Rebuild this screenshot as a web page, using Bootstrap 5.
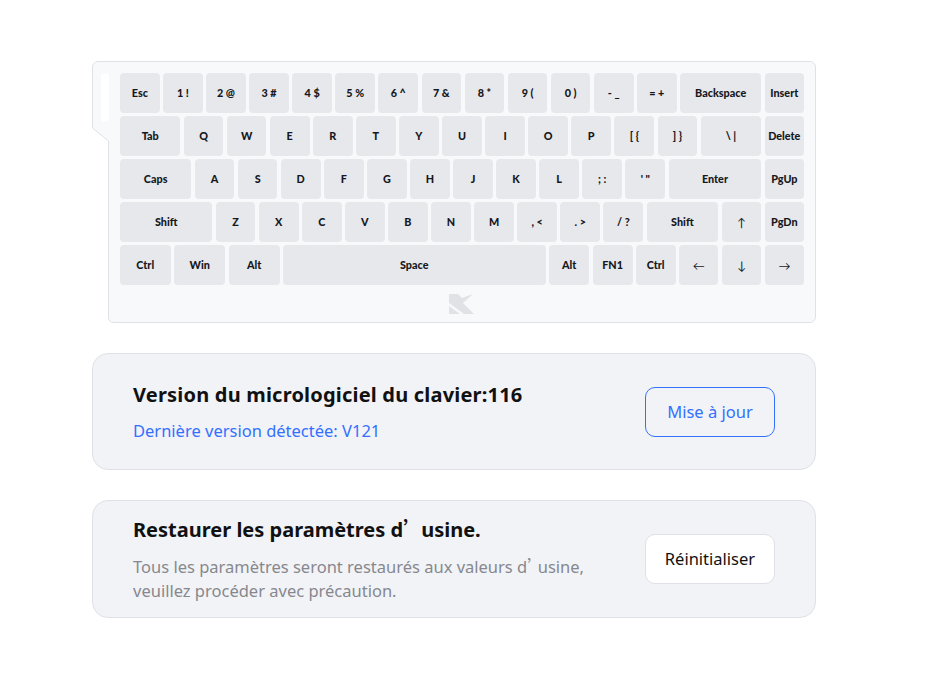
<!DOCTYPE html>
<html lang="fr">
<head>
    <meta charset="UTF-8">
    <title>Clavier</title>
    <link href="https://cdn.jsdelivr.net/npm/bootstrap@5.3.0/dist/css/bootstrap.min.css" rel="stylesheet">
    <style>
        body {
            background-color: #fff;
            font-family: "Noto Sans", "Liberation Sans", sans-serif;
        }
        .page-wrap {
            width: 724px;
            margin-left: 92px;
            padding-top: 61px;
        }
        .kb-box {
            position: relative;
            height: 262px;
            padding: 12px 0 0 28px;
        }
        .kb-shape {
            position: absolute;
            left: 0;
            top: 0;
        }
        .kb-keys {
            position: relative;
        }
        .kb-row {
            gap: 3.4px;
            margin-bottom: 3.25px;
        }
        .kb-key {
            height: 39.8px;
            padding-top: 1px;
            background-color: #e6e8ec;
            border-radius: 4px;
            color: #16181d;
            font-family: "Lato", "Liberation Sans", sans-serif;
            font-weight: 900;
            font-size: 10.8px;
            white-space: nowrap;
        }
        .kb-arrow {
            font-weight: 400;
            font-size: 12px;
        }
        .kb-logo {
            position: absolute;
            left: 357px;
            top: 233px;
        }
        .info-card {
            height: 117px;
            margin-top: 30px;
            padding: 0 40px;
            background-color: #f2f3f7;
            border: 1px solid #dfe1e6;
            border-radius: 16px;
        }
        .info-tall {
            height: 118px;
        }
        .info-title {
            font-size: 20px;
            font-weight: 700;
            line-height: 28px;
            color: #111;
            margin-bottom: 10px;
        }
        .title-spaced {
            letter-spacing: .2px;
        }
        .info-sub {
            font-size: 16.5px;
            line-height: 24px;
        }
        .sub-blue { color: #3370ff; }
        .sub-grey { color: #86888e; }
        .wide-quote {
            font-family: "Noto Sans CJK SC", sans-serif;
            letter-spacing: -2px;
        }
        .sub-grey .wide-quote {
            letter-spacing: -6px;
        }
        .act-btn {
            width: 130px;
            height: 50px;
            border-radius: 10px;
            font-size: 16.5px;
            padding: 1px 0 0;
        }
        .act-update {
            color: #3370ff;
            border: 1px solid #3370ff;
            background: transparent;
        }
        .act-reset {
            color: #111;
            border: 1px solid #dfe1e6;
            background: #fff;
        }
    </style>
</head>
<body>
    <div class="page-wrap">
        <div class="kb-box">
            <svg class="kb-shape" width="724" height="262" viewBox="0 0 724 262">
                <path d="M6 .5H718a5.500 5.500 0 0 1 5.500 5.500V256a5.500 5.500 0 0 1-5.500 5.500H21.500a5 5 0 0 1-5-5V80L.5 67V6A5.500 5.500 0 0 1 6 .5Z" fill="#f8f9fb" stroke="#dfe1e6"/>
                <rect x="9" y="12.500" width="8" height="48" rx="3" fill="#fff"/>
            </svg>
            <div class="kb-keys" id="keys"></div>
            <svg class="kb-logo" width="25" height="20" viewBox="0 0 25 20">
                <path d="M0 0H9L13 4L24 0L14 9L25 20H15L0 9Z" fill="#e0e2e6"/>
                <path d="M0 12L11 20H0Z" fill="#e0e2e6"/>
            </svg>
        </div>

        <div class="info-card d-flex align-items-center justify-content-between">
            <div>
                <div class="info-title title-spaced">Version du micrologiciel du clavier:116</div>
                <div class="info-sub sub-blue">Dernière version détectée: V121</div>
            </div>
            <button class="btn act-btn act-update">Mise à jour</button>
        </div>

        <div class="info-card info-tall d-flex align-items-center justify-content-between">
            <div>
                <div class="info-title">Restaurer les paramètres d<span class="wide-quote" lang="zh-CN">’</span>usine.</div>
                <div class="info-sub sub-grey">Tous les paramètres seront restaurés aux valeurs d<span class="wide-quote" lang="zh-CN">’</span>usine,<br>veuillez procéder avec précaution.</div>
            </div>
            <button class="btn act-btn act-reset">Réinitialiser</button>
        </div>
    </div>

    <script>
        // second value is the pitch: key width plus the gap after it
        const rows = [
            [["Esc",43.1],["1 !",43.1],["2 @",43.1],["3 #",43.1],["4 $",43.1],["5 %",43.1],["6 ^",43.1],["7 &",43.1],["8 *",43.1],["9 (",43.1],["0 )",43.1],["- _",43.1],["= +",43.1],["Backspace",84.7],["Insert",42.6]],
            [["Tab",63.7],["Q",43.1],["W",43.1],["E",43.1],["R",43.1],["T",43.1],["Y",43.1],["U",43.1],["I",43.1],["O",43.1],["P",43.1],["[ {",43.1],["] }",43.1],["\\ |",64.1],["Delete",42.6]],
            [["Caps",74.7],["A",43.1],["S",43.1],["D",43.1],["F",43.1],["G",43.1],["H",43.1],["J",43.1],["K",43.1],["L",43.1],["; :",43.1],["' \"",43.1],["Enter",96.2],["PgUp",42.6]],
            [["Shift",95.8],["Z",43.1],["X",43.1],["C",43.1],["V",43.1],["B",43.1],["N",43.1],["M",43.1],[", <",43.1],[". >",43.1],["/ ?",43.1],["Shift",75],["↑",43.2],["PgDn",42.6]],
            [["Ctrl",53.9],["Win",55],["Alt",54.1],["Space",266],["Alt",43.7],["FN1",43.3],["Ctrl",43],["←",43],["↓",43],["→",42.6]]
        ];

        const keys = document.getElementById("keys");
        rows.forEach(row => {
            const rowEl = document.createElement("div");
            rowEl.className = "kb-row d-flex";
            row.forEach(([label, pitch]) => {
                const key = document.createElement("div");
                key.className = "kb-key d-flex align-items-center justify-content-center";
                if ("←↑↓→".includes(label)) key.classList.add("kb-arrow");
                key.style.width = `${pitch - 3.4}px`;
                key.textContent = label;
                rowEl.appendChild(key);
            });
            keys.appendChild(rowEl);
        });
    </script>
    <script src="https://cdn.jsdelivr.net/npm/bootstrap@5.3.0/dist/js/bootstrap.bundle.min.js"></script>
</body>
</html>
